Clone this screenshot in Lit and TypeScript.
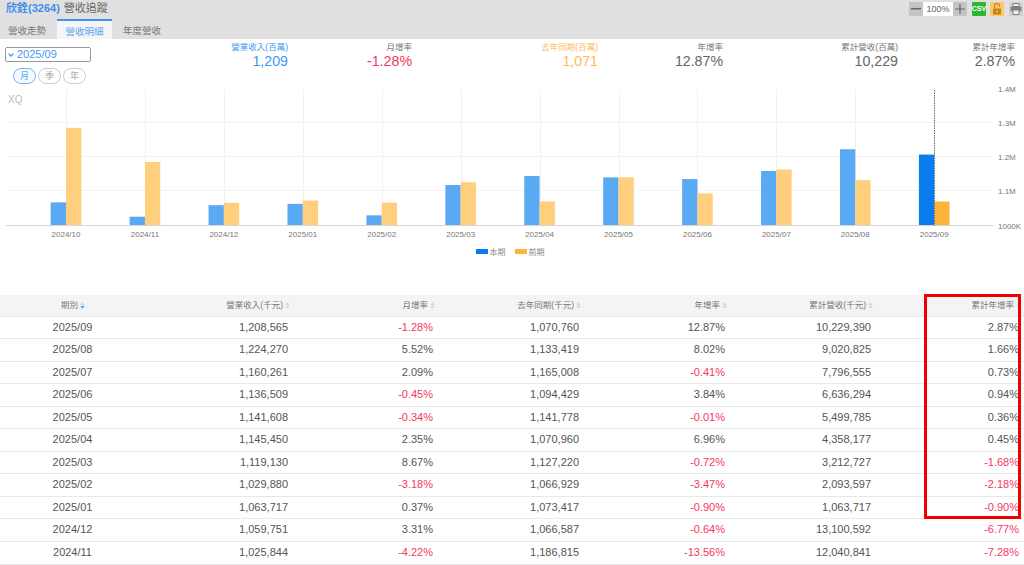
import { LitElement, html, css, svg } from "lit";
import { customElement } from "lit/decorators.js";

const rows: string[][] = [
  ["2025/09", "1,208,565", "-1.28%", "1,070,760", "12.87%", "10,229,390", "2.87%"],
  ["2025/08", "1,224,270", "5.52%", "1,133,419", "8.02%", "9,020,825", "1.66%"],
  ["2025/07", "1,160,261", "2.09%", "1,165,008", "-0.41%", "7,796,555", "0.73%"],
  ["2025/06", "1,136,509", "-0.45%", "1,094,429", "3.84%", "6,636,294", "0.94%"],
  ["2025/05", "1,141,608", "-0.34%", "1,141,778", "-0.01%", "5,499,785", "0.36%"],
  ["2025/04", "1,145,450", "2.35%", "1,070,960", "6.96%", "4,358,177", "0.45%"],
  ["2025/03", "1,119,130", "8.67%", "1,127,220", "-0.72%", "3,212,727", "-1.68%"],
  ["2025/02", "1,029,880", "-3.18%", "1,066,929", "-3.47%", "2,093,597", "-2.18%"],
  ["2025/01", "1,063,717", "0.37%", "1,073,417", "-0.90%", "1,063,717", "-0.90%"],
  ["2024/12", "1,059,751", "3.31%", "1,066,587", "-0.64%", "13,100,592", "-6.77%"],
  ["2024/11", "1,025,844", "-4.22%", "1,186,815", "-13.56%", "12,040,841", "-7.28%"],
];

const headers = ["期別", "營業收入(千元)", "月增率", "去年同期(千元)", "年增率", "累計營收(千元)", "累計年增率"];

const bars: [string, number, number][] = [
  ["2024/10", 1068000, 1287000],
  ["2024/11", 1025844, 1186815],
  ["2024/12", 1059751, 1066587],
  ["2025/01", 1063717, 1073417],
  ["2025/02", 1029880, 1066929],
  ["2025/03", 1119130, 1127220],
  ["2025/04", 1145450, 1070960],
  ["2025/05", 1141608, 1141778],
  ["2025/06", 1136509, 1094429],
  ["2025/07", 1160261, 1165008],
  ["2025/08", 1224270, 1133419],
  ["2025/09", 1208565, 1070760],
];

const stats = [
  { label: "營業收入(百萬)", value: "1,209", tone: "blue" },
  { label: "月增率", value: "-1.28%", tone: "red" },
  { label: "去年同期(百萬)", value: "1,071", tone: "orange" },
  { label: "年增率", value: "12.87%", tone: "" },
  { label: "累計營收(百萬)", value: "10,229", tone: "" },
  { label: "累計年增率", value: "2.87%", tone: "" },
];

const BASE = 225.5;
const SCALE = 34 / 100000;
const yOf = (v: number) => BASE - (v - 1000000) * SCALE;
const xOf = (i: number) => 66 + i * 78.93;

@customElement("app-root")
export class AppRoot extends LitElement {
  static styles = css`
    :host {
      display: block;
      width: 1024px;
      height: 565px;
      overflow: hidden;
      background: #fff;
      color: #555;
      font-family: "Liberation Sans", "Noto Sans CJK TC", sans-serif;
    }
    .head {
      height: 39px;
      background: #e0e0e0;
      display: flex;
      justify-content: space-between;
      box-sizing: border-box;
    }
    .head-left { display: flex; flex-direction: column; }
    .title {
      height: 19px;
      padding-left: 6px;
      font-size: 11px;
      line-height: 17px;
      display: flex;
      gap: 4px;
      color: #666;
    }
    .title b { color: #3d8fea; font-weight: bold; }
    .tabs { display: flex; height: 20px; }
    .tab {
      width: 55px;
      box-sizing: border-box;
      font-size: 9.5px;
      line-height: 24px;
      text-align: center;
      color: #777;
    }
    .tab.first { width: 57px; padding-right: 3px; }
    .tab.active {
      background: #f5f5f5;
      border-top: 2px solid #3d96f5;
      color: #5aa5f5;
      line-height: 22px;
    }
    .tab.last { width: 60px; }
    .tools { display: flex; align-items: flex-start; padding: 2px 1px 0 0; }
    .tool {
      width: 14px;
      height: 14px;
      display: flex;
      align-items: center;
      justify-content: center;
      border-radius: 1px;
    }
    .tool svg { display: block; }
    .zoom-btn { background: #c4c4c4; }
    .zoom-val {
      width: 30px;
      height: 14px;
      background: #fff;
      color: #666;
      font-size: 9px;
      line-height: 14px;
      text-align: center;
    }
    .csv {
      margin-left: 5px;
      background: #2fb52f;
      color: #fff;
      font-size: 7px;
      font-weight: bold;
      line-height: 14px;
    }
    .lock { margin-left: 4px; background: #fbc66c; }
    .print { margin-left: 5px; background: #d2d2d2; }

    .summary {
      height: 46px;
      display: grid;
      grid-template-columns: 288px 124px 186px 125px 175px 117px;
    }
    .stat { text-align: right; padding-top: 3px; }
    .stat-label { font-size: 8.5px; line-height: 11px; color: #777; }
    .stat-value { font-size: 14.2px; line-height: 17px; color: #666; }
    .blue .stat-label, .blue .stat-value { color: #3f97f5; }
    .red .stat-value { color: #f5375f; }
    .orange .stat-label, .orange .stat-value { color: #ffbb55; }
    .first-cell { display: flex; justify-content: space-between; }
    .filters { padding: 8px 0 0 5px; }
    .date {
      width: 86px;
      height: 15px;
      box-sizing: border-box;
      border: 1px solid #999;
      border-radius: 2px;
      color: #3f97f5;
      font-size: 11px;
      line-height: 13px;
      display: flex;
      align-items: center;
      gap: 3px;
      padding-left: 2px;
    }
    .pills { display: flex; gap: 2px; margin: 6px 0 0 8px; }
    .pill {
      width: 23px;
      height: 16px;
      box-sizing: border-box;
      border: 1px solid #ccc;
      border-radius: 8px;
      font-size: 9px;
      line-height: 14px;
      text-align: center;
      color: #aaa;
    }
    .pill.on { border-color: #7ab5f2; color: #5aa5f5; background: #f4f9ff; }

    .chart { display: block; width: 1024px; height: 210px; }
    .chart text { font-family: "Liberation Sans", "Noto Sans CJK TC", sans-serif; }

    .table { position: relative; }
    .row {
      display: grid;
      grid-template-columns: 146px 146px 145px 146px 146px 146px 148px;
      height: 22.55px;
      box-sizing: border-box;
      border-bottom: 1px solid #e8e8e8;
      font-size: 11px;
      line-height: 21.5px;
      color: #555;
    }
    .row.header {
      height: 21.5px;
      background: #f4f4f4;
      font-size: 8.5px;
      color: #777;
      border-bottom-color: #ececec;
    }
    .cell { text-align: right; padding-right: 4px; }
    .cell:first-child { text-align: center; padding-right: 1px; }
    .header .cell {
      display: flex;
      justify-content: flex-end;
      align-items: center;
      gap: 2px;
      padding-right: 2px;
    }
    .header .cell:first-child { justify-content: center; padding-left: 2px; }
    .cell.neg { color: #f5375f; }
    .mark {
      position: absolute;
      left: 924px;
      top: -1px;
      width: 97px;
      height: 225px;
      box-sizing: border-box;
      border: 3px solid #f00000;
      pointer-events: none;
    }
  `;

  private sortIcon(active: boolean) {
    return html`<svg width="5" height="7" viewBox="0 0 5 7">
      <path d="M2.5 0.3 L4.6 2.9 H0.4 Z" fill="#c6d6e6"></path>
      <path d="M2.5 6.7 L4.6 4.1 H0.4 Z" fill=${active ? "#4a9bee" : "#c6d6e6"}></path>
    </svg>`;
  }

  private chart() {
    const ticks: [string, number][] = [
      ["1.4M", 89],
      ["1.3M", 123],
      ["1.2M", 157],
      ["1.1M", 191],
    ];
    return html`<svg class="chart" viewBox="0 85 1024 210">
      ${ticks.slice(1).map(
        ([, y]) => svg`<line x1="6" x2="992" y1=${y - 0.5} y2=${y - 0.5} stroke="#f3f3f3"></line>`
      )}
      ${bars.map((_, i) => {
        const x = Math.round(xOf(i)) + 0.5;
        return i === 11
          ? svg``
          : svg`<line x1=${x} x2=${x} y1="90" y2="226" stroke="#f1f1f1"></line>`;
      })}
      ${bars.map(([label, cur, prev], i) => {
        const x = xOf(i);
        const last = i === 11;
        return svg`
          <rect x=${x - 15.3} y=${yOf(cur)} width="15.3" height=${BASE - yOf(cur)} fill=${last ? "#0a7ced" : "#5aa9f5"}></rect>
          <rect x=${x} y=${yOf(prev)} width="15.3" height=${BASE - yOf(prev)} fill=${last ? "#ffb33c" : "#ffcf7d"}></rect>
          <text x=${x} y="237" font-size="8" fill="#777" text-anchor="middle">${label}</text>
        `;
      })}
      <line x1="6" x2="994" y1="225.5" y2="225.5" stroke="#d6d6d6"></line>
      <line x1="934.5" x2="934.5" y1="90" y2="226" stroke="#667" stroke-dasharray="1.5 1"></line>
      ${ticks.map(
        ([t, y]) => svg`<text x="998" y=${y + 3} font-size="8" fill="#777">${t}</text>`
      )}
      <text x="998" y="228.5" font-size="8" fill="#777">1000K</text>
      <text x="8" y="103" font-size="10" fill="#bbb">XQ</text>
      <rect x="476" y="249" width="12" height="5" fill="#0a7ced"></rect>
      <text x="489.5" y="255" font-size="8" fill="#888">本期</text>
      <rect x="515" y="249" width="12" height="5" fill="#ffb33c"></rect>
      <text x="528.5" y="255" font-size="8" fill="#888">前期</text>
    </svg>`;
  }

  render() {
    return html`
      <div class="head">
        <div class="head-left">
          <div class="title"><b>欣銓(3264)</b><span>營收追蹤</span></div>
          <div class="tabs">
            <div class="tab first">營收走勢</div>
            <div class="tab active">營收明細</div>
            <div class="tab last">年度營收</div>
          </div>
        </div>
        <div class="tools">
          <div class="tool zoom-btn">
            <svg width="10" height="2"><rect width="10" height="1.5" fill="#666"></rect></svg>
          </div>
          <div class="zoom-val">100%</div>
          <div class="tool zoom-btn">
            <svg width="10" height="10"><path d="M5 0v10M0 5h10" stroke="#666" stroke-width="1.2"></path></svg>
          </div>
          <div class="tool csv">CSV</div>
          <div class="tool lock">
            <svg width="10" height="12" viewBox="0 0 10 12">
              <path d="M2.5 5.5V3a2.5 2.5 0 0 1 5 0v.8" fill="none" stroke="#c28414" stroke-width="1.2"></path>
              <rect x="1" y="5.5" width="8" height="6" rx="0.6" fill="#c28414"></rect>
              <rect x="4.3" y="7.5" width="1.4" height="2.2" fill="#fbc66c"></rect>
            </svg>
          </div>
          <div class="tool print">
            <svg width="12" height="12" viewBox="0 0 12 12">
              <rect x="3" y="0.5" width="6" height="3" fill="#eee" stroke="#808080"></rect>
              <rect x="0.5" y="3.5" width="11" height="5" rx="1" fill="#808080"></rect>
              <rect x="3" y="7" width="6" height="4.5" fill="#eee" stroke="#808080"></rect>
            </svg>
          </div>
        </div>
      </div>

      <div class="summary">
        ${stats.map((s, i) => {
          const stat = html`<div class="stat ${s.tone}">
            <div class="stat-label">${s.label}</div>
            <div class="stat-value">${s.value}</div>
          </div>`;
          return i === 0
            ? html`<div class="first-cell">
                <div class="filters">
                  <div class="date">
                    <svg width="6" height="4" viewBox="0 0 6 4">
                      <path d="M0.6 0.6 L3 3 L5.4 0.6" fill="none" stroke="#3f97f5" stroke-width="1.3"></path>
                    </svg>
                    <span>2025/09</span>
                  </div>
                  <div class="pills">
                    <div class="pill on">月</div>
                    <div class="pill">季</div>
                    <div class="pill">年</div>
                  </div>
                </div>
                ${stat}
              </div>`
            : stat;
        })}
      </div>

      ${this.chart()}

      <div class="table">
        <div class="row header">
          ${headers.map(
            (h, i) => html`<div class="cell"><span>${h}</span>${this.sortIcon(i === 0)}</div>`
          )}
        </div>
        ${rows.map(
          (r) => html`<div class="row">
            ${r.map(
              (c) => html`<div class="cell ${c.startsWith("-") ? "neg" : ""}">${c}</div>`
            )}
          </div>`
        )}
        <div class="mark"></div>
      </div>
    `;
  }
}
